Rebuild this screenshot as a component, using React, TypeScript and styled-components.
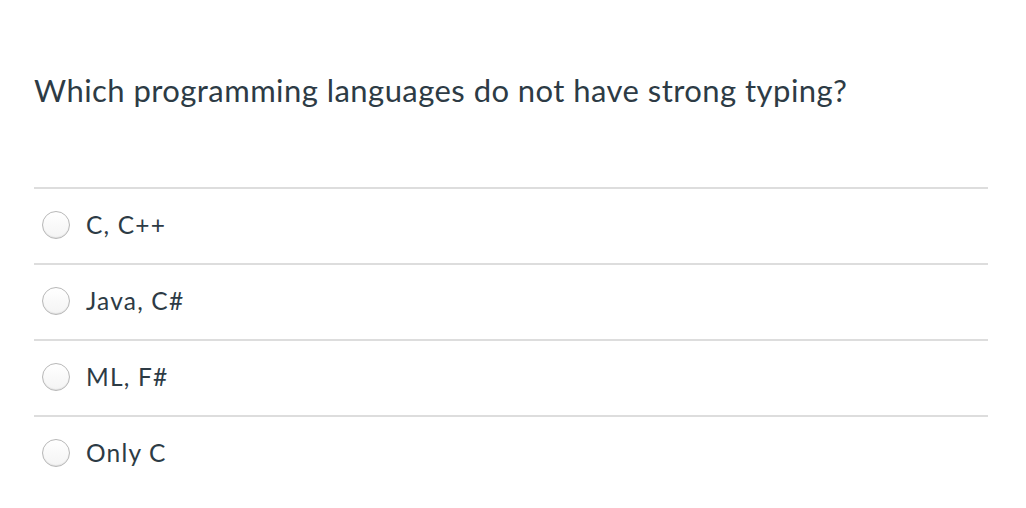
import { createGlobalStyle } from "styled-components";
import styled from "styled-components";

const GlobalStyle = createGlobalStyle`
  html, body {
    margin: 0;
    padding: 0;
    background: #fff;
  }
  body {
    font-family: Lato, "Liberation Sans", sans-serif;
    color: #2d3b45;
  }
`;

const Page = styled.div`
  padding: 70px 38px 0 34px;
`;

const Question = styled.h1`
  margin: 0;
  font-size: 31px;
  letter-spacing: 0.45px;
  font-weight: 400;
  line-height: 40px;
`;

const Answers = styled.div`
  margin-top: 77px;
  display: flex;
  flex-direction: column;
`;

const Answer = styled.label`
  box-sizing: border-box;
  display: flex;
  align-items: center;
  gap: 16px;
  height: 76px;
  padding: 0 0 3px 8px;
  border-top: 2px solid #dddddd;
  font-size: 24.5px;
  letter-spacing: 1.2px;
  cursor: pointer;
`;

const Radio = styled.span`
  width: 26px;
  height: 26px;
  border-radius: 50%;
  border: 1px solid #b8b8b8;
  background: linear-gradient(#ffffff, #f4f4f4);
  box-shadow: inset 0 -1px 1px rgba(0, 0, 0, 0.08);
  flex: none;
`;

const answers = ["C, C++", "Java, C#", "ML, F#", "Only C"];

export default function App() {
  return (
    <>
      <GlobalStyle />
      <Page>
        <Question>Which programming languages do not have strong typing?</Question>
        <Answers>
          {answers.map((a) => (
            <Answer key={a}>
              <Radio />
              {a}
            </Answer>
          ))}
        </Answers>
      </Page>
    </>
  );
}
